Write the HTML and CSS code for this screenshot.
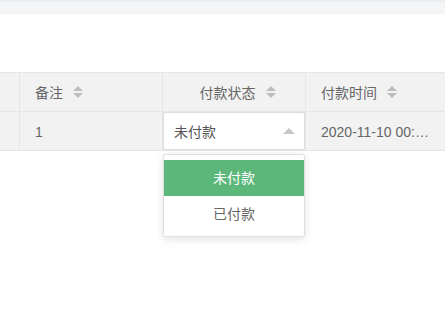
FILE: index.html
```html
<!DOCTYPE html>
<html lang="zh-CN">
<head>
    <meta charset="UTF-8">
    <title>订单列表</title>
    <link rel="stylesheet" href="styles.css">
</head>
<body>

<div class="topbar"></div>
<div class="spacer"></div>

<div class="table">
    <!-- 表头 -->
    <div class="row head">
        <div class="cell first"></div>
        <div class="cell">
            备注
            <svg class="sort" width="10" height="12" viewBox="0 0 10 12"><path d="M5 0L10 5H0Z"/><path d="M0 7H10L5 12Z"/></svg>
        </div>
        <div class="cell center">
            付款状态
            <svg class="sort" width="10" height="12" viewBox="0 0 10 12"><path d="M5 0L10 5H0Z"/><path d="M0 7H10L5 12Z"/></svg>
        </div>
        <div class="cell">
            付款时间
            <svg class="sort" width="10" height="12" viewBox="0 0 10 12"><path d="M5 0L10 5H0Z"/><path d="M0 7H10L5 12Z"/></svg>
        </div>
    </div>

    <!-- 数据行 -->
    <div class="row body">
        <div class="cell first"></div>
        <div class="cell">1</div>
        <div class="cell select-cell">
            <div class="select">
                <span>未付款</span>
                <i class="arrow"></i>
            </div>
        </div>
        <div class="cell"><span class="ellipsis">2020-11-10 00:00:00</span></div>
    </div>
</div>

<!-- 下拉菜单 -->
<div class="dropdown">
    <div class="option active">未付款</div>
    <div class="option">已付款</div>
</div>

</body>
</html>
```

FILE: styles.css
```css
* {
    margin: 0;
    padding: 0;
    box-sizing: border-box;
}

html, body {
    height: 100%;
}

body {
    font-family: "Liberation Sans", "Noto Sans CJK SC", sans-serif;
    font-size: 14px;
    color: #666;
    background-color: #fff;
}

/* 顶部灰条 */
.topbar {
    height: 14px;
    background-color: #f4f5f7;
    border-top: 2px solid #eceef1;
}

.spacer {
    height: 58px;
}

/* 表格 */
.table {
    border-top: 1px solid #e6e6e6;
}

.row {
    display: grid;
    grid-template-columns: 20px 143px 143px 1fr;
    height: 39px;
    background-color: #f2f2f2;
    border-bottom: 1px solid #e6e6e6;
}

.cell {
    display: flex;
    align-items: center;
    padding-left: 15px;
    border-right: 1px solid #e6e6e6;
    white-space: nowrap;
    min-width: 0;
}

.cell:last-child {
    border-right: none;
}

.cell.first {
    padding: 0;
}

.cell.center {
    justify-content: center;
    padding-left: 7px;
}

.sort {
    margin-left: 10px;
    fill: #bdbdbd;
}

.body .cell {
    padding-top: 1px;
}

.ellipsis {
    overflow: hidden;
    text-overflow: ellipsis;
    width: 110px;
}

/* 下拉选择框 */
.body .select-cell {
    padding: 0;
}

.select {
    width: 100%;
    height: 100%;
    display: flex;
    align-items: center;
    justify-content: space-between;
    padding: 0 9px 0 10px;
    background-color: #fff;
    border: 1px solid #dcdcdc;
    border-radius: 2px;
    color: #555;
}

.arrow {
    width: 0;
    height: 0;
    border-left: 6px solid transparent;
    border-right: 6px solid transparent;
    border-bottom: 6px solid #c6c6c6;
}

/* 下拉菜单（表格下方） */
.dropdown {
    width: 142px;
    margin: 3px 0 0 163px;
    background-color: #fff;
    border: 1px solid #e0e0e0;
    border-radius: 2px;
    padding: 5px 0 4px;
    box-shadow: 0 2px 8px rgba(0, 0, 0, 0.12);
}

.option {
    height: 36px;
    line-height: 36px;
    text-align: center;
    color: #666;
}

.option.active {
    background-color: #5cb87a;
    color: #fff;
}
```
